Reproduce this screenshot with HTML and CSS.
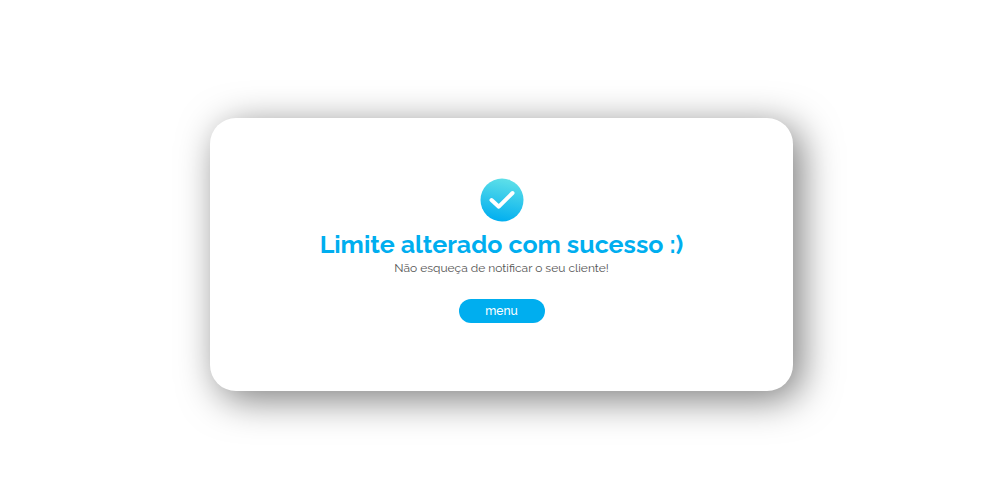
FILE: index.html
```html
<!DOCTYPE html>
<html lang="pt-BR">
<head>
<meta charset="utf-8">
<meta name="viewport" content="width=device-width, initial-scale=1">
<title>Limite alterado</title>
<link rel="stylesheet" href="styles.css">
</head>
<body>
<main class="page">
  <section class="card">
    <svg class="check" viewBox="0 0 44 44" aria-hidden="true">
      <defs>
        <linearGradient id="fill" x1="0.6" y1="0" x2="0.4" y2="1">
          <stop offset="0" stop-color="#5fe0e8"/>
          <stop offset="1" stop-color="#00aef0"/>
        </linearGradient>
      </defs>
      <circle cx="22" cy="22" r="21.5" fill="url(#fill)"/>
      <path d="M11.5 22 L18.8 28.7 L32.5 15" fill="none" stroke="#fff" stroke-width="4" stroke-linecap="round" stroke-linejoin="round"/>
    </svg>
    <h1 class="title">Limite alterado com sucesso :)</h1>
    <p class="note">Não esqueça de notificar o seu cliente!</p>
    <button class="menu" type="button">menu</button>
  </section>
</main>
</body>
</html>
```
FILE: styles.css
```css
* {
  box-sizing: border-box;
}

body {
  margin: 0;
  background: #fff;
  font-family: Raleway, Lato, "Open Sans", sans-serif;
}

.page {
  display: flex;
  justify-content: center;
  padding: 118px 24px 64px 27px;
}

.card {
  display: flex;
  flex-direction: column;
  align-items: center;
  width: 100%;
  max-width: 583px;
  padding: 60px 24px 68px;
  border-radius: 26px;
  background: #fff;
  box-shadow: 8px 8px 38px rgba(0, 0, 0, 0.52);
}

.check {
  width: 44px;
  height: 44px;
}

.title {
  margin: 7px 0 0;
  color: #00aeef;
  font-size: 25px;
  font-weight: 700;
  line-height: 31px;
  text-align: center;
}

.note {
  margin: 0;
  color: #555;
  font-size: 12px;
  line-height: 16px;
}

.menu {
  width: 86px;
  height: 24px;
  margin-top: 23px;
  padding: 0;
  border: 0;
  border-radius: 12px;
  background: #00aeef;
  color: #fff;
  font: inherit;
  font-size: 12px;
  font-weight: 500;
  line-height: 24px;
}
```
